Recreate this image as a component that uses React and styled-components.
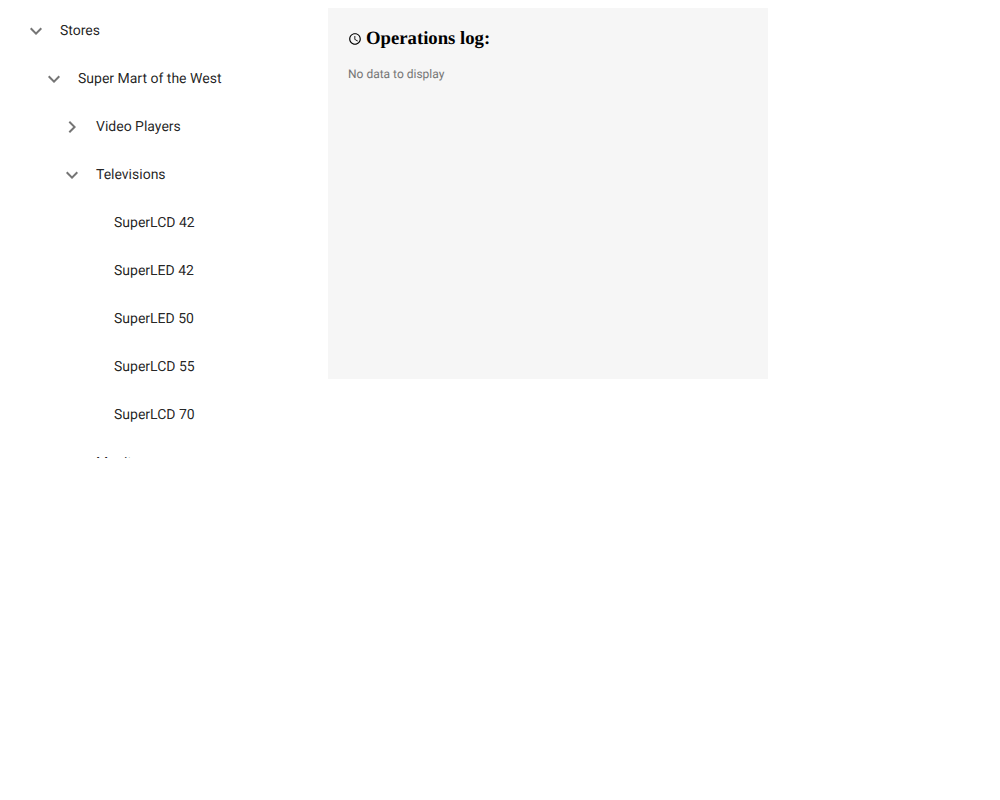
import React, { useState } from "react";
import styled, { createGlobalStyle } from "styled-components";
import { MdAccessTime, MdChevronRight, MdExpandMore } from "react-icons/md";

const GlobalStyle = createGlobalStyle`
  *, *::before, *::after { box-sizing: border-box; }
  body {
    margin: 8px;
    background: #fff;
    color: #000;
    font-family: "Liberation Serif", "Times New Roman", serif;
    font-size: 16px;
    text-rendering: geometricPrecision;
  }
`;

const Page = styled.main`
  display: flex;
  align-items: flex-start;
`;

const TreeView = styled.ul`
  flex: 0 0 320px;
  height: 450px;
  margin: 0;
  padding: 0 0 0 16px;
  overflow: hidden;
  list-style: none;
  color: rgba(0, 0, 0, 0.87);
  font: 14px/20px Roboto, sans-serif;
`;

const Branch = styled.ul`
  margin: 0;
  padding: 0 0 0 18px;
  list-style: none;
`;

const Row = styled.div`
  display: flex;
  align-items: center;
  gap: 12px;
  height: 48px;
  padding-bottom: 2px;
`;

const Toggle = styled.button`
  display: flex;
  flex: none;
  width: 24px;
  height: 24px;
  align-items: center;
  justify-content: center;
  padding: 0;
  border: 0;
  background: none;
  color: #757575;
  cursor: pointer;

  svg {
    flex: none;
  }
`;

const TogglePlaceholder = styled.span`
  flex: 0 0 24px;
`;

const Label = styled.span`
  white-space: nowrap;
`;

const LogPanel = styled.section`
  flex: 0 1 440px;
  min-height: 371px;
  padding: 20px;
  background: #f6f6f6;
`;

const LogHeader = styled.header`
  display: flex;
  align-items: center;
  gap: 4px;
`;

const LogTitle = styled.h3`
  margin: 0;
  line-height: 22px;
`;

const EmptyMessage = styled.p`
  margin: 14px 0 0;
  color: #757575;
  font: 12px/20px Roboto, sans-serif;
`;

const stores = {
  text: "Stores",
  expanded: true,
  items: [
    {
      text: "Super Mart of the West",
      expanded: true,
      items: [
        {
          text: "Video Players",
          items: [{ text: "HD Video Player" }, { text: "SuperHD Video Player" }],
        },
        {
          text: "Televisions",
          expanded: true,
          items: [
            { text: "SuperLCD 42" },
            { text: "SuperLED 42" },
            { text: "SuperLED 50" },
            { text: "SuperLCD 55" },
            { text: "SuperLCD 70" },
          ],
        },
        { text: "Monitors" },
      ],
    },
  ],
};

function TreeNode({ node }) {
  const [open, setOpen] = useState(Boolean(node.expanded));
  return (
    <li>
      <Row>
        {node.items ? (
          <Toggle
            type="button"
            aria-label={node.text}
            aria-expanded={open}
            onClick={() => setOpen(!open)}
          >
            {open ? <MdExpandMore size={24} /> : <MdChevronRight size={24} />}
          </Toggle>
        ) : (
          <TogglePlaceholder />
        )}
        <Label>{node.text}</Label>
      </Row>
      {node.items && open && (
        <Branch>
          {node.items.map((item) => (
            <TreeNode key={item.text} node={item} />
          ))}
        </Branch>
      )}
    </li>
  );
}

export default function App() {
  return (
    <>
      <GlobalStyle />
      <Page>
        <TreeView>
          <TreeNode node={stores} />
        </TreeView>
        <LogPanel>
          <LogHeader>
            <MdAccessTime size={14} />
            <LogTitle>Operations log:</LogTitle>
          </LogHeader>
          <EmptyMessage>No data to display</EmptyMessage>
        </LogPanel>
      </Page>
    </>
  );
}
